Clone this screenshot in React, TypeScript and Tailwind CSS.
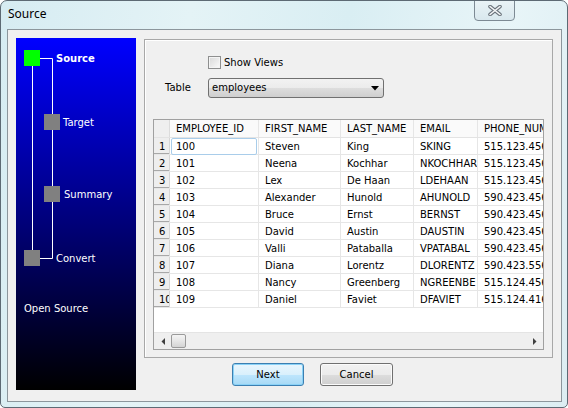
import React from "react";

const rows = [
  ["1", "100", "Steven", "King", "SKING", "515.123.4567"],
  ["2", "101", "Neena", "Kochhar", "NKOCHHAR", "515.123.4568"],
  ["3", "102", "Lex", "De Haan", "LDEHAAN", "515.123.4569"],
  ["4", "103", "Alexander", "Hunold", "AHUNOLD", "590.423.4567"],
  ["5", "104", "Bruce", "Ernst", "BERNST", "590.423.4568"],
  ["6", "105", "David", "Austin", "DAUSTIN", "590.423.4569"],
  ["7", "106", "Valli", "Pataballa", "VPATABAL", "590.423.4560"],
  ["8", "107", "Diana", "Lorentz", "DLORENTZ", "590.423.5567"],
  ["9", "108", "Nancy", "Greenberg", "NGREENBE", "515.124.4569"],
  ["10", "109", "Daniel", "Faviet", "DFAVIET", "515.124.4169"],
];

const headers = ["EMPLOYEE_ID", "FIRST_NAME", "LAST_NAME", "EMAIL", "PHONE_NUMBER"];

function Cell({ w, children, last }: { w?: string; children: React.ReactNode; last?: boolean }) {
  return (
    <div
      className={`${w ?? "flex-1"} shrink-0 h-full flex items-center pl-[6px] overflow-hidden whitespace-nowrap ${
        last ? "" : "border-r border-[#e6e6e6]"
      }`}
    >
      {children}
    </div>
  );
}

export default function App() {
  return (
    <div className="w-[568px] h-[408px] flex flex-col border border-[#5d6a74] rounded-t-[7px] rounded-b-[5px] bg-[linear-gradient(100deg,#d6ecf2_0%,#e4f3f6_30%,#d9eef3_55%,#e8f5f8_80%,#dcedf2_100%)] font-['DejaVu_Sans',sans-serif] text-[10px] text-black overflow-hidden">
      {/* Title bar */}
      <div className="h-[28px] flex items-start shrink-0">
        <div className="pl-[7px] pt-[5px] font-['Noto_Sans',sans-serif] text-[12px] leading-[16px] text-black">
          Source
        </div>
        <div className="ml-auto mr-[52px] -mt-px w-[41px] h-[21px] border border-[#7d8a94] rounded-b-[4px] bg-[linear-gradient(to_bottom,#e9f3f6,#d9e8ee)] flex items-center justify-center">
          <svg width="14" height="11" viewBox="0 0 14 11">
            <path d="M2 1.5 L12 9.5 M12 1.5 L2 9.5" stroke="#6b747c" strokeWidth="3.6" strokeLinecap="round" />
            <path d="M2 1.5 L12 9.5 M12 1.5 L2 9.5" stroke="#f4f6f8" strokeWidth="1.6" strokeLinecap="round" />
          </svg>
        </div>
      </div>

      {/* Client area */}
      <div className="flex-1 ml-[6px] mr-[5px] mb-[5px] border border-[#8c969c] bg-[#f0f0f0] flex gap-[8px] px-[8px] pt-[8px]">
        {/* Left step panel */}
        <div className="relative w-[120px] h-[352px] shrink-0 bg-[linear-gradient(to_bottom,#0000ff,#000000)] text-white">
          <svg className="absolute inset-0" width="120" height="352" viewBox="0 0 120 352">
            <line x1="16.5" y1="28" x2="16.5" y2="212" stroke="#fff" strokeWidth="1" />
            <line x1="36.5" y1="20.5" x2="36.5" y2="220.5" stroke="#fff" strokeWidth="1" />
            <line x1="24" y1="20.5" x2="36.5" y2="20.5" stroke="#fff" strokeWidth="1" />
            <line x1="24" y1="220.5" x2="36.5" y2="220.5" stroke="#fff" strokeWidth="1" />
            <rect x="8" y="12" width="16" height="16" fill="#00ff00" />
            <rect x="28" y="76" width="16" height="16" fill="#808080" />
            <rect x="28" y="148" width="16" height="16" fill="#808080" />
            <rect x="8" y="212" width="16" height="16" fill="#808080" />
          </svg>
          <div className="absolute left-[40px] top-[15px] leading-[12px] font-bold">Source</div>
          <div className="absolute left-[47px] top-[79px] leading-[12px]">Target</div>
          <div className="absolute left-[48px] top-[151px] leading-[12px]">Summary</div>
          <div className="absolute left-[40px] top-[215px] leading-[12px]">Convert</div>
          <div className="absolute left-[8px] top-[265px] leading-[12px]">Open Source</div>
        </div>

        {/* Right column */}
        <div className="flex-1 flex flex-col pt-px">
          {/* Group box */}
          <div className="h-[319px] border border-[#a8a8a8] shadow-[inset_1px_1px_0_#ffffff] flex flex-col">
            <div className="mt-[16px] ml-[63px] flex items-center h-[13px]">
              <div className="w-[13px] h-[13px] border border-[#8e8f8f] bg-[linear-gradient(135deg,#d8d8d8,#fbfbfb)] shadow-[inset_0_0_0_1px_#f4f4f4]" />
              <span className="ml-[3px] leading-[12px]">Show Views</span>
            </div>
            <div className="mt-[9px] flex items-center h-[20px]">
              <div className="ml-[20px] w-[43px] leading-[12px]">Table</div>
              <div className="w-[176px] h-[20px] border border-[#707070] rounded-[3px] bg-[linear-gradient(to_bottom,#f2f2f2_0%,#ebebeb_50%,#dddddd_51%,#cfcfcf_100%)] flex items-center justify-between pl-[3px] pr-[4px]">
                <span className="leading-[12px]">employees</span>
                <svg width="8" height="5" viewBox="0 0 8 5">
                  <path d="M0 0 H8 L4 4.5 Z" fill="#000" />
                </svg>
              </div>
            </div>

            {/* Grid */}
            <div className="mt-[21px] ml-[8px] w-[391px] h-[231px] border border-[#a0a0a0] bg-white flex flex-col overflow-hidden">
              <div className="h-[18px] flex shrink-0 border-b border-[#e3e3e3] bg-[#fafafa]">
                <div className="w-[16px] shrink-0 h-full bg-[#efefef] border-r border-[#dcdcdc]" />
                <Cell w="w-[89px]">{headers[0]}</Cell>
                <Cell w="w-[82px]">{headers[1]}</Cell>
                <Cell w="w-[73px]">{headers[2]}</Cell>
                <Cell w="w-[64px]">{headers[3]}</Cell>
                <Cell last>{headers[4]}</Cell>
              </div>
              {rows.map((r, i) => (
                <div key={i} className="h-[17px] flex shrink-0 border-b border-[#e6e6e6]">
                  <div className="w-[16px] shrink-0 h-full bg-[#eeeeee] border-r border-[#d6d6d6] shadow-[inset_0_-1px_0_#a8a8a8] flex items-center pl-[5px] overflow-hidden whitespace-nowrap">
                    {r[0]}
                  </div>
                  <div className="relative w-[89px] shrink-0 h-full flex items-center pl-[6px] border-r border-[#e6e6e6]">
                    {i === 0 && (
                      <div className="absolute left-[1px] right-[1px] top-0 bottom-[-1px] border border-[#a9cdea] rounded-[2px]" />
                    )}
                    {r[1]}
                  </div>
                  <Cell w="w-[82px]">{r[2]}</Cell>
                  <Cell w="w-[73px]">{r[3]}</Cell>
                  <Cell w="w-[64px]">{r[4]}</Cell>
                  <Cell last>{r[5]}</Cell>
                </div>
              ))}
              <div className="flex-1" />
              {/* Horizontal scrollbar */}
              <div className="h-[17px] shrink-0 flex items-center bg-[#efefef] border-t border-[#e4e4e4]">
                <div className="w-[17px] h-full flex items-center justify-center">
                  <svg width="4" height="7" viewBox="0 0 4 7">
                    <path d="M4 0 V7 L0.5 3.5 Z" fill="#404040" />
                  </svg>
                </div>
                <div className="w-[15px] h-[14px] border border-[#9a9a9a] rounded-[2px] bg-[linear-gradient(to_bottom,#f4f4f4,#e6e6e6_50%,#d4d4d4)]" />
                <div className="flex-1" />
                <div className="w-[17px] h-full flex items-center justify-center">
                  <svg width="4" height="7" viewBox="0 0 4 7">
                    <path d="M0 0 V7 L3.5 3.5 Z" fill="#404040" />
                  </svg>
                </div>
              </div>
            </div>
          </div>

          {/* Buttons */}
          <div className="mt-[5px] pl-[88px] flex gap-[16px]">
            <div className="w-[72px] h-[23px] border border-[#3c7fb1] rounded-[3px] bg-[linear-gradient(to_bottom,#eaf6fd_0%,#d9f0fc_50%,#bee6fd_51%,#a7d9f5_100%)] shadow-[inset_0_0_0_1px_#8ad2f7] flex items-center justify-center leading-[12px]">
              Next
            </div>
            <div className="w-[73px] h-[23px] border border-[#707070] rounded-[3px] bg-[linear-gradient(to_bottom,#f2f2f2_0%,#ebebeb_50%,#dddddd_51%,#cfcfcf_100%)] shadow-[inset_0_0_0_1px_#fbfbfb] flex items-center justify-center leading-[12px]">
              Cancel
            </div>
          </div>
        </div>
      </div>
    </div>
  );
}
